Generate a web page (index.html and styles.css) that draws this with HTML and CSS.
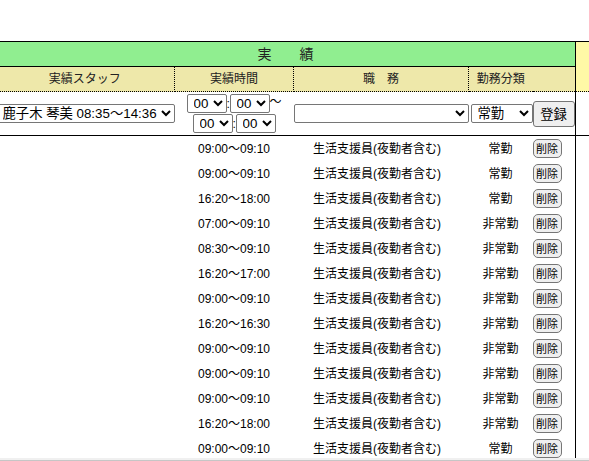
FILE: index.html
```html
<!DOCTYPE html>
<html lang="ja">
<head>
<meta charset="utf-8">
<title>実績</title>
<link rel="stylesheet" href="styles.css">
</head>
<body>
<div class="viewport">
  <table class="grid">
    <colgroup>
      <col class="c-staff"><col class="c-time"><col class="c-job"><col class="c-kind"><col class="c-act"><col class="c-side">
    </colgroup>
    <thead>
      <tr class="title-row">
        <th class="title" colspan="5">実　　績</th>
        <th class="side" rowspan="2"></th>
      </tr>
      <tr class="sub">
        <th class="sep">実績スタッフ</th>
        <th class="sep">実績時間</th>
        <th class="sep">職　務</th>
        <th>勤務分類</th>
        <th></th>
      </tr>
    </thead>
    <tbody>
      <tr class="form-row">
        <td class="staff-cell"><select class="staff"><option>鹿子木 琴美 08:35～14:36</option></select></td>
        <td class="time-cell">
          <div class="tline"><select class="hm"><option>00</option></select><span class="colon">:</span><select class="hm"><option>00</option></select><span class="tilde">～</span></div>
          <div class="tline"><select class="hm"><option>00</option></select><span class="colon">:</span><select class="hm"><option>00</option></select></div>
        </td>
        <td class="job-cell"><select class="job"><option></option></select></td>
        <td class="kind-cell"><select class="kind"><option>常勤</option><option>非常勤</option></select></td>
        <td class="act-cell"><button class="reg">登録</button></td>
        <td class="side-cell"></td>
      </tr>
      <tr><td></td><td class="c">09:00～09:10</td><td class="c job">生活支援員(夜勤者含む)</td><td class="c">常勤</td><td class="act"><button class="del">削除</button></td><td class="side-cell"></td></tr>
      <tr><td></td><td class="c">09:00～09:10</td><td class="c job">生活支援員(夜勤者含む)</td><td class="c">常勤</td><td class="act"><button class="del">削除</button></td><td class="side-cell"></td></tr>
      <tr><td></td><td class="c">16:20～18:00</td><td class="c job">生活支援員(夜勤者含む)</td><td class="c">常勤</td><td class="act"><button class="del">削除</button></td><td class="side-cell"></td></tr>
      <tr><td></td><td class="c">07:00～09:10</td><td class="c job">生活支援員(夜勤者含む)</td><td class="c">非常勤</td><td class="act"><button class="del">削除</button></td><td class="side-cell"></td></tr>
      <tr><td></td><td class="c">08:30～09:10</td><td class="c job">生活支援員(夜勤者含む)</td><td class="c">非常勤</td><td class="act"><button class="del">削除</button></td><td class="side-cell"></td></tr>
      <tr><td></td><td class="c">16:20～17:00</td><td class="c job">生活支援員(夜勤者含む)</td><td class="c">非常勤</td><td class="act"><button class="del">削除</button></td><td class="side-cell"></td></tr>
      <tr><td></td><td class="c">09:00～09:10</td><td class="c job">生活支援員(夜勤者含む)</td><td class="c">非常勤</td><td class="act"><button class="del">削除</button></td><td class="side-cell"></td></tr>
      <tr><td></td><td class="c">16:20～16:30</td><td class="c job">生活支援員(夜勤者含む)</td><td class="c">非常勤</td><td class="act"><button class="del">削除</button></td><td class="side-cell"></td></tr>
      <tr><td></td><td class="c">09:00～09:10</td><td class="c job">生活支援員(夜勤者含む)</td><td class="c">非常勤</td><td class="act"><button class="del">削除</button></td><td class="side-cell"></td></tr>
      <tr><td></td><td class="c">09:00～09:10</td><td class="c job">生活支援員(夜勤者含む)</td><td class="c">非常勤</td><td class="act"><button class="del">削除</button></td><td class="side-cell"></td></tr>
      <tr><td></td><td class="c">09:00～09:10</td><td class="c job">生活支援員(夜勤者含む)</td><td class="c">非常勤</td><td class="act"><button class="del">削除</button></td><td class="side-cell"></td></tr>
      <tr><td></td><td class="c">16:20～18:00</td><td class="c job">生活支援員(夜勤者含む)</td><td class="c">非常勤</td><td class="act"><button class="del">削除</button></td><td class="side-cell"></td></tr>
      <tr><td></td><td class="c">09:00～09:10</td><td class="c job">生活支援員(夜勤者含む)</td><td class="c">常勤</td><td class="act"><button class="del">削除</button></td><td class="side-cell"></td></tr>
      <tr><td></td><td class="c">16:20～18:00</td><td class="c job">生活支援員(夜勤者含む)</td><td class="c">常勤</td><td class="act"><button class="del">削除</button></td><td class="side-cell"></td></tr>
    </tbody>
  </table>
</div>
<div class="hbar"></div>
</body>
</html>
```

FILE: styles.css
```css
html, body {
  margin: 0;
  padding: 0;
  overflow: hidden;
  background: #fff;
}
body {
  font-family: "Liberation Sans", "Noto Sans CJK JP", sans-serif;
  font-size: 12px;
  color: #000;
}
.viewport {
  height: 458px;
  overflow: hidden;
  padding-top: 41px;
  box-sizing: border-box;
}
.grid {
  border-collapse: collapse;
  table-layout: fixed;
  width: 680px;
  margin-left: -5px;
}
.c-staff { width: 179px; }
.c-time { width: 119px; }
.c-job { width: 175px; }
.c-kind { width: 64px; }
.c-act { width: 43px; }
.c-side { width: 100px; }

th {
  font-weight: normal;
  padding: 0;
  color: #222;
}
.title {
  background: #90ee90;
  border: 1px solid #000;
  height: 24px;
  font-size: 14px;
  line-height: 16px;
}
.side {
  background: #fff9a6;
  border: 1px solid #000;
  border-bottom: 1px dotted #000;
}
.sub th {
  background: #eee8aa;
  height: 24px;
  line-height: 14px;
  border-bottom: 1px dotted #000;
}
.sub th.sep {
  border-right: 1px dotted #000;
}
td {
  padding: 0;
  height: 25px;
  vertical-align: middle;
  line-height: 14px;
}
td.c { text-align: center; }
td.job { padding-right: 8px; }
td.act { text-align: left; }
.side-cell {
  border-left: 1px solid #000;
}
.form-row td {
  height: 43px;
  border-bottom: 1px solid #000;
}
select {
  font-family: "Liberation Sans", "Noto Sans CJK JP", sans-serif;
  font-size: 13.33px;
  height: 19px;
  padding: 0 0 0 2px;
  border: 1px solid #767676;
  border-radius: 2px;
  background: #fff;
  color: #000;
  box-sizing: border-box;
  vertical-align: middle;
}
.staff { width: 100%; display: block; }
.time-cell {
  padding: 0;
}
.tline {
  display: flex;
  justify-content: center;
  align-items: center;
  height: 20px;
}
.hm { width: 40px; flex: none; }
.colon {
  width: 3px;
  text-align: center;
  line-height: 14px;
}
.tilde {
  width: 12px;
  line-height: 14px;
  font-size: 12px;
  margin-top: -3px;
}
.job-cell .job { width: 175px; display: block; }
.kind { width: 62px; }
.kind-cell { text-align: right; }
button {
  font-family: "Liberation Sans", "Noto Sans CJK JP", sans-serif;
  color: #000;
  background: #efefef;
  border: 1px solid #767676;
  border-radius: 3px;
  padding: 0;
  box-sizing: border-box;
  vertical-align: middle;
}
.reg {
  width: 42px;
  height: 26px;
  font-size: 13.33px;
}
.del {
  width: 29px;
  height: 19px;
  font-size: 11px;
  line-height: 12px;
  border-radius: 5px;
}
.hbar {
  height: 2px;
  background: #f0f0f0;
  border-bottom: 1px solid #c6c6c6;
}
```
